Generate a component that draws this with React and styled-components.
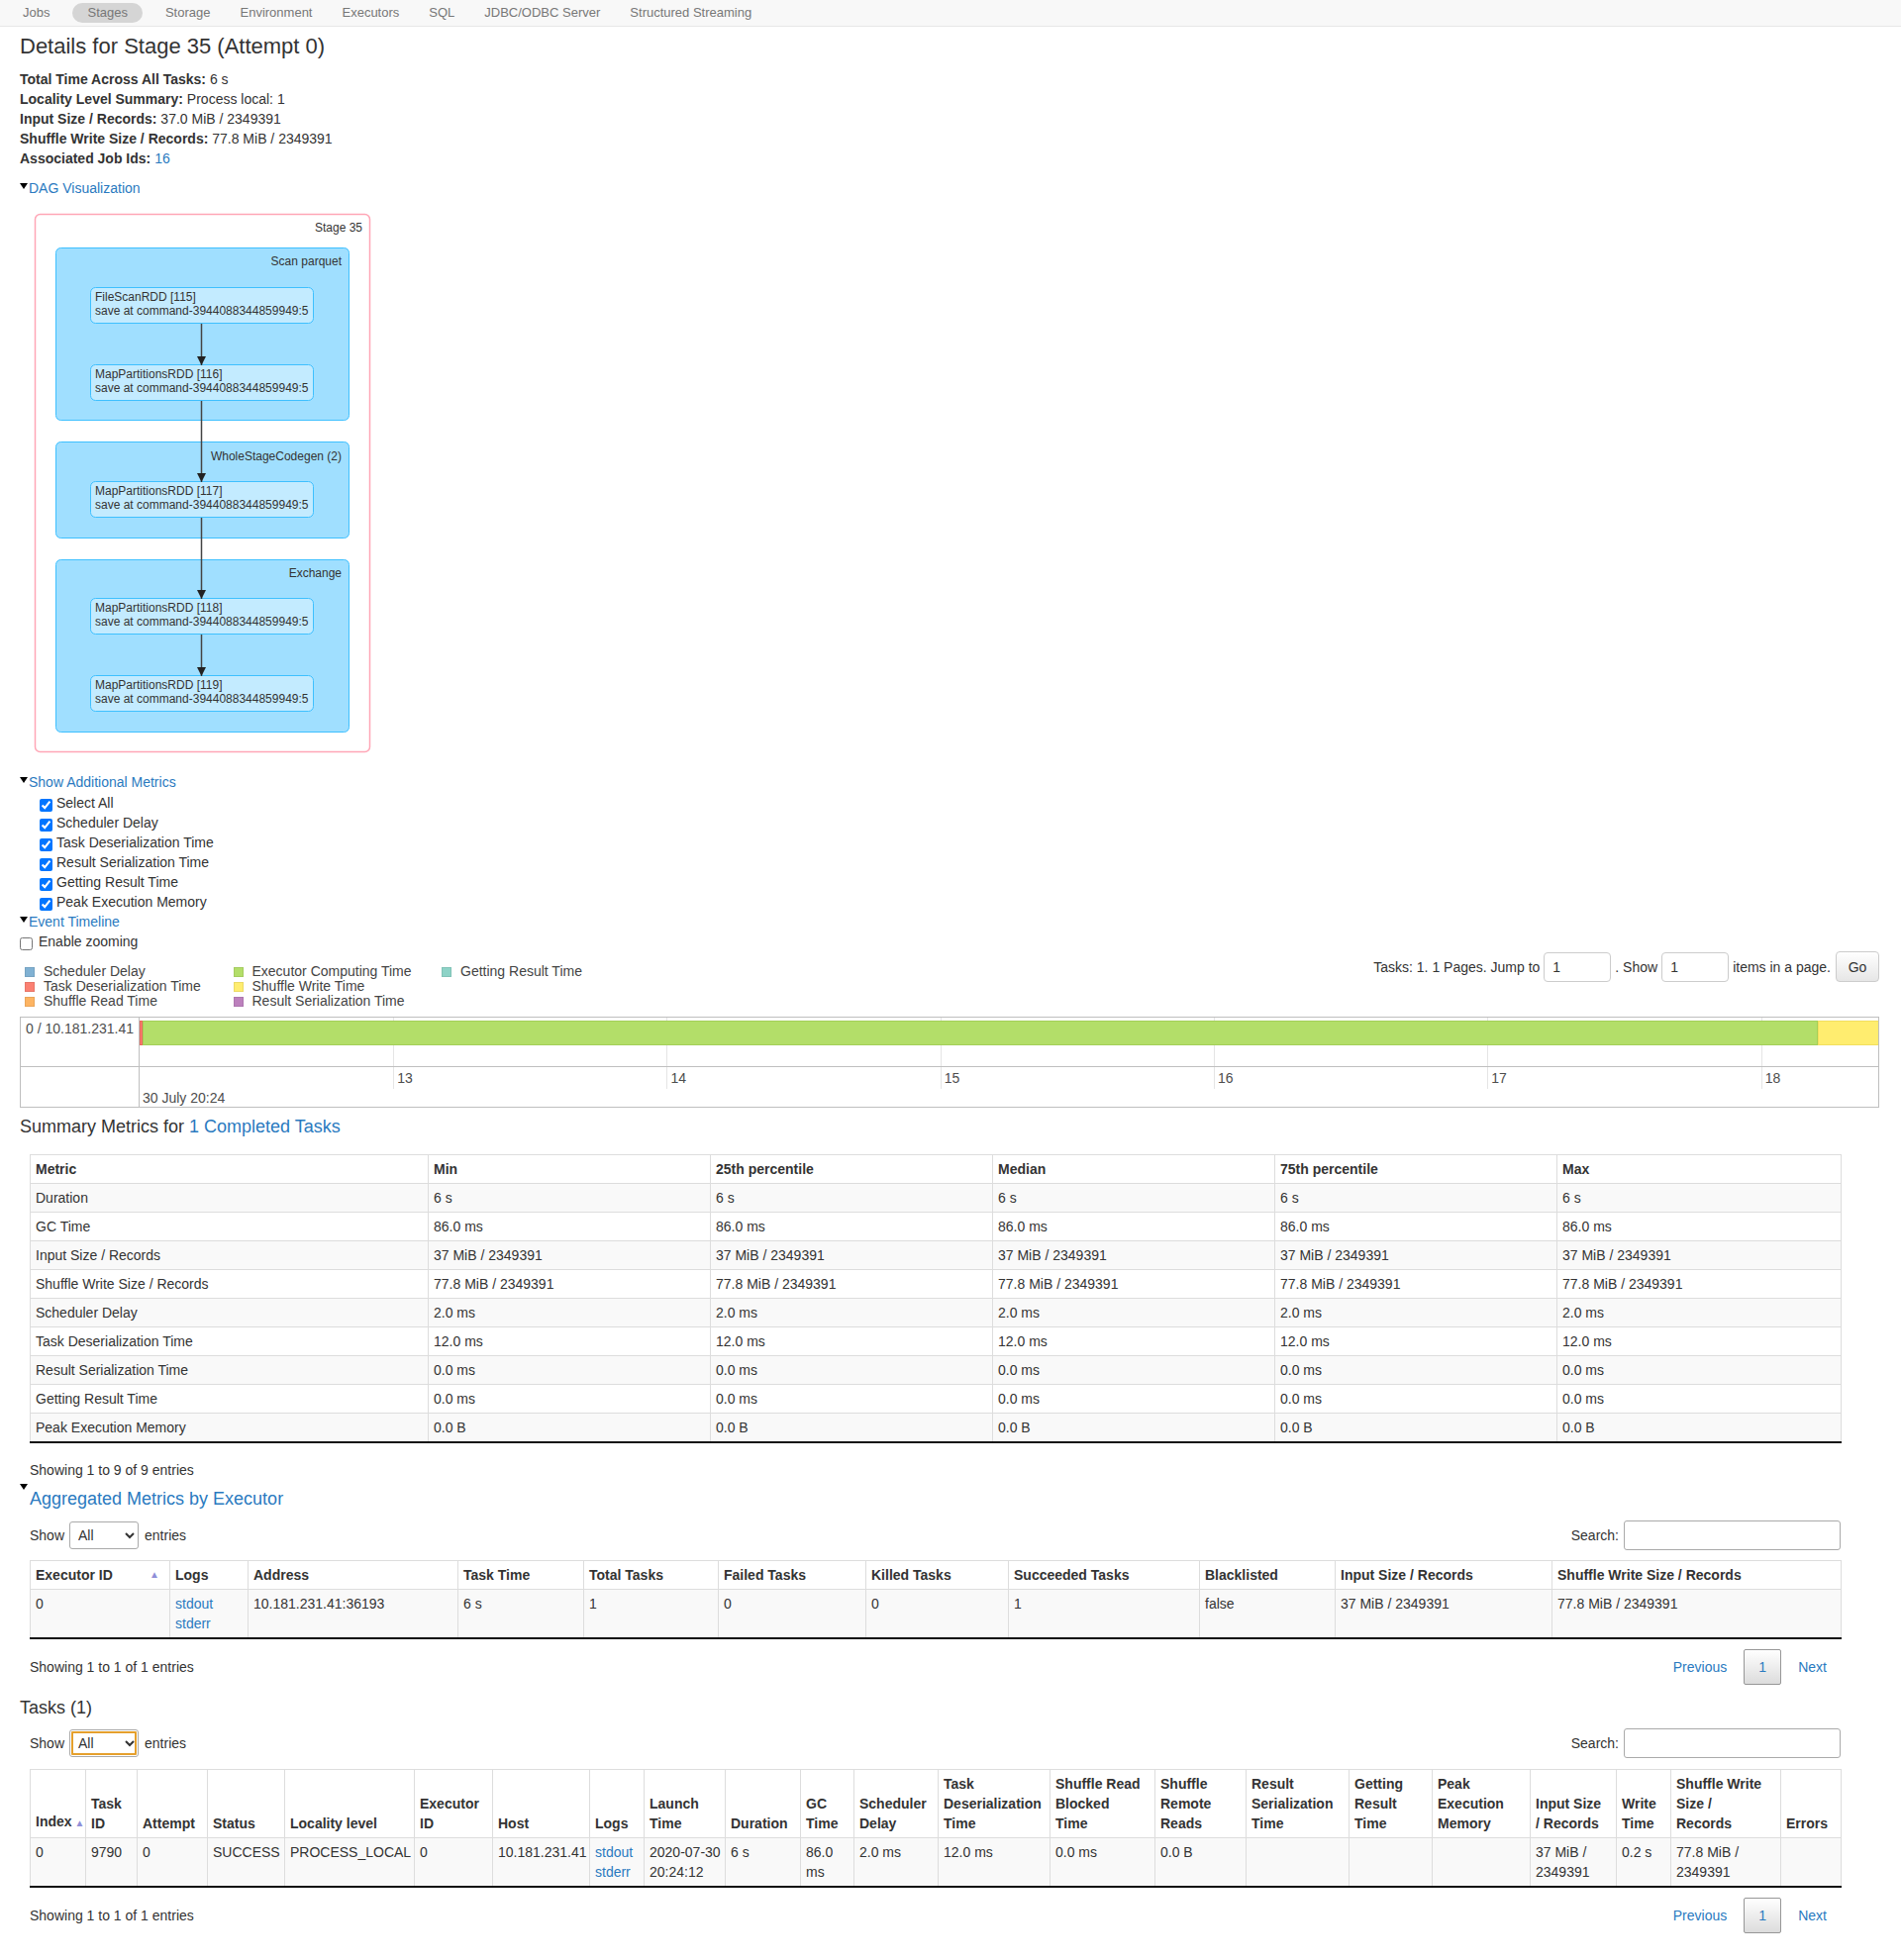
import React from 'react';
import styled, { createGlobalStyle, css } from 'styled-components';

const LINK = '#2a7ac0';

const GlobalStyle = createGlobalStyle`
  html, body {
    margin: 0;
    padding: 0;
    background: #fff;
  }
  body {
    font-family: "Liberation Sans", Arial, Helvetica, sans-serif;
    font-size: 14px;
    line-height: 20px;
    color: #333;
  }
  a {
    color: ${LINK};
    text-decoration: none;
  }
`;

const Navbar = styled.nav`
  display: flex;
  align-items: center;
  height: 27px;
  box-sizing: border-box;
  padding-left: 8px;
  background: #f8f8f8;
  border-bottom: 1px solid #e7e7e7;
  font-size: 13px;
`;

const NavItem = styled.a`
  padding: 0 15px;
  line-height: 20px;
  color: #777 !important;
  ${(p) =>
    p.$active &&
    css`
      margin: 0 8px;
      background: #d5d5d5;
      border-radius: 10px;
    `}
`;

const Page = styled.div`
  padding: 0 22px 20px 20px;
`;

const Title = styled.h3`
  margin: 6px 0 9px;
  font-size: 22px;
  line-height: 28px;
  font-weight: 400;
`;

const InfoList = styled.ul`
  list-style: none;
  margin: 0;
  padding: 0;
`;

const InfoItem = styled.li`
  line-height: 20px;
`;

const Toggle = styled.div`
  display: flex;
  align-items: center;
  margin-top: ${(p) => p.$mt || 0}px;
  line-height: 20px;
`;

const Arrow = styled.span`
  display: inline-block;
  width: 0;
  height: 0;
  border-left: 4px solid transparent;
  border-right: 4px solid transparent;
  border-top: 6px solid #000;
  margin: -4px 1px 0 0;
`;

const DagSvg = styled.svg`
  display: block;
  font-family: "Liberation Sans", Arial, sans-serif;
  font-size: 12px;
  fill: #333;
`;

const CheckList = styled.div`
  padding-left: 20px;
  margin-top: 1px;
`;

const CheckRow = styled.label`
  display: flex;
  align-items: center;
  height: 20px;
`;

const Check = styled.input`
  width: 13px;
  height: 13px;
  margin: 5px ${(p) => p.$gap || 4}px 0 0;
`;

const TimelineHead = styled.div`
  display: flex;
  justify-content: space-between;
  align-items: flex-start;
`;

const Legend = styled.div`
  display: grid;
  grid-template-columns: repeat(3, 210.5px);
  grid-template-rows: repeat(3, 15px);
  grid-auto-flow: column;
  padding: 13px 0 0 5px;
`;

const LegendItem = styled.div`
  display: flex;
  align-items: center;
  gap: 9px;
  line-height: 15px;
  color: #444;
`;

const Swatch = styled.span`
  width: 10px;
  height: 10px;
  background: ${(p) => p.$color};
  border: 1px solid rgba(0, 0, 0, 0.08);
  box-sizing: border-box;
`;

const PageForm = styled.form`
  display: flex;
  align-items: center;
  gap: 4px;
  height: 31px;
`;

const SmallInput = styled.input`
  width: 68px;
  height: 30px;
  box-sizing: border-box;
  padding: 0 8px;
  border: 1px solid #ccc;
  border-radius: 4px;
  font: inherit;
  color: #333;
`;

const GoButton = styled.button`
  width: 44px;
  height: 31px;
  margin-left: 1px;
  border: 1px solid #ccc;
  border-radius: 4px;
  background: linear-gradient(#fff, #e6e6e6);
  font: inherit;
  color: #333;
`;

const Timeline = styled.div`
  display: grid;
  grid-template-columns: 120px 1fr;
  grid-template-rows: 50px 40px;
  margin-top: 8px;
  border: 1px solid #bfbfbf;
  color: #4d4d4d;
`;

const GroupLabel = styled.div`
  padding: 1px 5px;
  border-right: 1px solid #bfbfbf;
  border-bottom: ${(p) => (p.$axis ? 'none' : '1px solid #bfbfbf')};
  color: #4d4d4d;
`;

const Canvas = styled.div`
  position: relative;
  overflow: hidden;
  border-bottom: ${(p) => (p.$axis ? 'none' : '1px solid #bfbfbf')};
`;

const GridLine = styled.div`
  position: absolute;
  top: 0;
  width: 1px;
  height: ${(p) => (p.$axis ? '22px' : '100%')};
  background: #e5e5e5;
`;

const MinorLabel = styled.div`
  position: absolute;
  top: 1px;
`;

const MajorLabel = styled.div`
  position: absolute;
  left: 3px;
  top: 21px;
`;

const Bar = styled.div`
  position: absolute;
  top: 3px;
  left: 0;
  height: 25px;
  display: flex;
`;

const Segment = styled.div`
  flex: none;
  height: 100%;
  box-sizing: border-box;
  background: ${(p) => p.$color};
  border: 1px solid ${(p) => p.$edge};
`;

const SectionTitle = styled.h4`
  margin: ${(p) => p.$mt || 0}px 0 0;
  font-size: 18px;
  line-height: 22px;
  font-weight: 400;
`;

const DataWrap = styled.div`
  margin: ${(p) => p.$mt || 0}px 39px 0 10px;
`;

const CollapseHead = styled.div`
  display: flex;
  align-items: flex-start;
  margin-top: 4px;
`;

const CollapseArrow = styled(Arrow)`
  margin: 0 2px 0 0;
`;

const ControlRow = styled.div`
  display: flex;
  justify-content: space-between;
  align-items: center;
  height: 30px;
  margin: ${(p) => p.$mt || 0}px 39px 0 10px;
`;

const ShowEntries = styled.label`
  display: flex;
  align-items: center;
`;

const EntrySelect = styled.select`
  width: 70px;
  height: 28px;
  margin: 0 6px 0 5px;
  padding: 0 4px;
  border: 1px solid #aaa;
  border-radius: 3px;
  background: #fff;
  font: inherit;
  color: #333;
  ${(p) =>
    p.$focused &&
    css`
      outline: 2px solid #e5a02d;
      outline-offset: -4px;
    `}
`;

const SearchLabel = styled.label`
  display: flex;
  align-items: center;
`;

const SearchInput = styled.input`
  width: 219px;
  height: 30px;
  box-sizing: border-box;
  margin-left: 5px;
  border: 1px solid #aaa;
  border-radius: 3px;
  font: inherit;
`;

const Table = styled.table`
  width: 100%;
  table-layout: fixed;
  border-collapse: collapse;
`;

const HeadCell = styled.th`
  padding: 4px 5px;
  border: 1px solid #ddd;
  text-align: left;
  vertical-align: bottom;
  font-weight: 700;
  line-height: 20px;
  background: #fff;
`;

const BodyRow = styled.tr`
  background: ${(p) => (p.$odd ? '#f9f9f9' : '#fff')};
`;

const Cell = styled.td`
  padding: 4px 5px;
  border: 1px solid #ddd;
  border-bottom: ${(p) => (p.$last ? '2px solid #111' : '1px solid #ddd')};
  vertical-align: top;
  line-height: 20px;
  white-space: ${(p) => (p.$nowrap ? 'nowrap' : 'normal')};
`;

const SortIcon = styled.span`
  float: ${(p) => (p.$inline ? 'none' : 'right')};
  margin: ${(p) => (p.$inline ? '0 0 0 3px' : '0 5px 0 0')};
  font-size: 10px;
  color: #8f8fd8;
`;

const LogLink = styled.a`
  display: block;
`;

const FooterRow = styled.div`
  display: flex;
  justify-content: space-between;
  align-items: center;
  height: 36px;
  margin-top: ${(p) => p.$mt || 0}px;
`;

const InfoText = styled.div`
  padding-top: ${(p) => p.$pt || 0}px;
`;

const Pager = styled.div`
  display: flex;
  align-items: center;
`;

const PageLink = styled.a`
  padding: 0 14px;
`;

const PageCurrent = styled.span`
  display: inline-flex;
  align-items: center;
  justify-content: center;
  width: 38px;
  height: 36px;
  margin: 0 3px;
  box-sizing: border-box;
  border: 1px solid #979797;
  border-radius: 2px;
  background: linear-gradient(#fff, #dcdcdc);
  color: ${LINK};
`;

const navItems = ['Jobs', 'Stages', 'Storage', 'Environment', 'Executors', 'SQL', 'JDBC/ODBC Server', 'Structured Streaming'];

const metricChecks = [
  'Select All',
  'Scheduler Delay',
  'Task Deserialization Time',
  'Result Serialization Time',
  'Getting Result Time',
  'Peak Execution Memory',
];

const legend = [
  ['Scheduler Delay', '#80B1D3'],
  ['Task Deserialization Time', '#FB8072'],
  ['Shuffle Read Time', '#FDB462'],
  ['Executor Computing Time', '#B3DE69'],
  ['Shuffle Write Time', '#FFED6F'],
  ['Result Serialization Time', '#BC80BD'],
  ['Getting Result Time', '#8DD3C7'],
];

// timeline scale: seconds past 20:24:00
const PX_PER_SEC = 276.3;
const WINDOW_START = 12.073;
const ticks = [13, 14, 15, 16, 17, 18];
const segments = [
  { ms: 12, color: '#FB8072', edge: '#e8695b' },
  { ms: 6123, color: '#B3DE69', edge: '#a3cf58' },
  { ms: 300, color: '#FFED6F', edge: '#f2df5e' },
];

const summaryHead = ['Metric', 'Min', '25th percentile', 'Median', '75th percentile', 'Max'];
const summaryCols = [402, 285, 285, 285, 285, 287];
const summaryRows = [
  ['Duration', '6 s'],
  ['GC Time', '86.0 ms'],
  ['Input Size / Records', '37 MiB / 2349391'],
  ['Shuffle Write Size / Records', '77.8 MiB / 2349391'],
  ['Scheduler Delay', '2.0 ms'],
  ['Task Deserialization Time', '12.0 ms'],
  ['Result Serialization Time', '0.0 ms'],
  ['Getting Result Time', '0.0 ms'],
  ['Peak Execution Memory', '0.0 B'],
];

const execHead = [
  'Executor ID',
  'Logs',
  'Address',
  'Task Time',
  'Total Tasks',
  'Failed Tasks',
  'Killed Tasks',
  'Succeeded Tasks',
  'Blacklisted',
  'Input Size / Records',
  'Shuffle Write Size / Records',
];
const execCols = [141, 79, 212, 127, 136, 149, 144, 193, 137, 219, 292];
const execRow = ['0', 'LOGS', '10.181.231.41:36193', '6 s', '1', '0', '0', '1', 'false', '37 MiB / 2349391', '77.8 MiB / 2349391'];

const taskHead = [
  ['Index'],
  ['Task', 'ID'],
  ['Attempt'],
  ['Status'],
  ['Locality level'],
  ['Executor', 'ID'],
  ['Host'],
  ['Logs'],
  ['Launch', 'Time'],
  ['Duration'],
  ['GC', 'Time'],
  ['Scheduler', 'Delay'],
  ['Task', 'Deserialization', 'Time'],
  ['Shuffle Read', 'Blocked', 'Time'],
  ['Shuffle', 'Remote', 'Reads'],
  ['Result', 'Serialization', 'Time'],
  ['Getting', 'Result', 'Time'],
  ['Peak', 'Execution', 'Memory'],
  ['Input Size', '/ Records'],
  ['Write', 'Time'],
  ['Shuffle Write', 'Size /', 'Records'],
  ['Errors'],
];
const taskCols = [56, 52, 71, 78, 131, 79, 98, 55, 82, 76, 54, 85, 113, 106, 92, 104, 84, 99, 87, 55, 111, 61];
const taskRow = [
  ['0'],
  ['9790'],
  ['0'],
  ['SUCCESS'],
  ['PROCESS_LOCAL'],
  ['0'],
  ['10.181.231.41'],
  'LOGS',
  ['2020-07-30', '20:24:12'],
  ['6 s'],
  ['86.0', 'ms'],
  ['2.0 ms'],
  ['12.0 ms'],
  ['0.0 ms'],
  ['0.0 B'],
  [],
  [],
  [],
  ['37 MiB /', '2349391'],
  ['0.2 s'],
  ['77.8 MiB /', '2349391'],
  [],
];

const dagClusters = [
  { label: 'Scan parquet', y: 50, h: 174, ly: 68 },
  { label: 'WholeStageCodegen (2)', y: 246, h: 97, ly: 265 },
  { label: 'Exchange', y: 365, h: 174, ly: 383 },
];
const dagNodes = [
  { name: 'FileScanRDD [115]', y: 90 },
  { name: 'MapPartitionsRDD [116]', y: 168 },
  { name: 'MapPartitionsRDD [117]', y: 286 },
  { name: 'MapPartitionsRDD [118]', y: 404 },
  { name: 'MapPartitionsRDD [119]', y: 482 },
];
const NODE_H = 36;
const EDGE_X = 183.5;

const Lines = ({ lines }) =>
  lines.map((l, j) => (
    <React.Fragment key={j}>
      {j > 0 && <br />}
      {l}
    </React.Fragment>
  ));

const DagGraph = () => (
  <DagSvg width="380" height="565" viewBox="0 0 380 565">
    <defs>
      <marker id="dag-arrow" viewBox="0 0 10 10" refX="10" refY="5" markerUnits="userSpaceOnUse" markerWidth="9" markerHeight="9" orient="auto">
        <path d="M0,0 L10,5 L0,10 z" fill="#222" />
      </marker>
    </defs>
    <rect x="15.5" y="16.5" width="338" height="543" rx="5" fill="#fff" stroke="#FFA6B6" strokeWidth="1.5" />
    <text x="346" y="34" textAnchor="end">Stage 35</text>
    {dagClusters.map((c) => (
      <g key={c.label}>
        <rect x="36.5" y={c.y + 0.5} width="296" height={c.h} rx="5" fill="#A0DFFF" stroke="#3EC0FF" />
        <text x="325" y={c.ly} textAnchor="end">
          {c.label}
        </text>
      </g>
    ))}
    {dagNodes.map((n) => (
      <g key={n.name}>
        <rect x="71.5" y={n.y + 0.5} width="225" height={NODE_H} rx="5" fill="#C3EBFF" stroke="#3EC0FF" />
        <text x="76" y={n.y + 14}>
          {n.name}
        </text>
        <text x="76" y={n.y + 28}>
          save at command-3944088344859949:5
        </text>
      </g>
    ))}
    {dagNodes.slice(1).map((n, i) => (
      <line
        key={n.name}
        x1={EDGE_X}
        y1={dagNodes[i].y + NODE_H + 1}
        x2={EDGE_X}
        y2={n.y + 1}
        stroke="#444"
        strokeWidth="1.5"
        markerEnd="url(#dag-arrow)"
      />
    ))}
  </DagSvg>
);

const EventTimeline = () => (
  <Timeline>
    <GroupLabel>0 / 10.181.231.41</GroupLabel>
    <Canvas>
      {ticks.map((t) => (
        <GridLine key={t} style={{ left: (t - WINDOW_START) * PX_PER_SEC }} />
      ))}
      <Bar>
        {segments.map((s) => (
          <Segment key={s.color} $color={s.color} $edge={s.edge} style={{ width: (s.ms / 1000) * PX_PER_SEC }} />
        ))}
      </Bar>
    </Canvas>
    <GroupLabel $axis />
    <Canvas $axis>
      {ticks.map((t) => (
        <React.Fragment key={t}>
          <GridLine $axis style={{ left: (t - WINDOW_START) * PX_PER_SEC }} />
          <MinorLabel style={{ left: (t - WINDOW_START) * PX_PER_SEC + 4 }}>{t}</MinorLabel>
        </React.Fragment>
      ))}
      <MajorLabel>30 July 20:24</MajorLabel>
    </Canvas>
  </Timeline>
);

const Logs = () => (
  <>
    <LogLink href="#">stdout</LogLink>
    <LogLink href="#">stderr</LogLink>
  </>
);

const Pagination = () => (
  <Pager>
    <PageLink href="#">Previous</PageLink>
    <PageCurrent>1</PageCurrent>
    <PageLink href="#">Next</PageLink>
  </Pager>
);

const Controls = ({ mt, focused }) => (
  <ControlRow $mt={mt}>
    <ShowEntries>
      Show
      <EntrySelect defaultValue="all" $focused={focused}>
        <option value="all">All</option>
        <option value="20">20</option>
        <option value="40">40</option>
      </EntrySelect>
      entries
    </ShowEntries>
    <SearchLabel>
      Search:
      <SearchInput type="search" />
    </SearchLabel>
  </ControlRow>
);

const ColGroup = ({ widths }) => (
  <colgroup>
    {widths.map((w, i) => (
      <col key={i} style={{ width: w }} />
    ))}
  </colgroup>
);

export default function App() {
  return (
    <>
      <GlobalStyle />
      <Navbar>
        {navItems.map((item) => (
          <NavItem key={item} href="#" $active={item === 'Stages'}>
            {item}
          </NavItem>
        ))}
      </Navbar>
      <Page>
        <Title>Details for Stage 35 (Attempt 0)</Title>
        <InfoList>
          <InfoItem>
            <strong>Total Time Across All Tasks:</strong> 6 s
          </InfoItem>
          <InfoItem>
            <strong>Locality Level Summary:</strong> Process local: 1
          </InfoItem>
          <InfoItem>
            <strong>Input Size / Records:</strong> 37.0 MiB / 2349391
          </InfoItem>
          <InfoItem>
            <strong>Shuffle Write Size / Records:</strong> 77.8 MiB / 2349391
          </InfoItem>
          <InfoItem>
            <strong>Associated Job Ids:</strong> <a href="#">16</a>
          </InfoItem>
        </InfoList>

        <Toggle $mt={10}>
          <Arrow />
          <a href="#">DAG Visualization</a>
        </Toggle>
        <DagGraph />

        <Toggle $mt={15}>
          <Arrow />
          <a href="#">Show Additional Metrics</a>
        </Toggle>
        <CheckList>
          {metricChecks.map((m) => (
            <CheckRow key={m}>
              <Check type="checkbox" defaultChecked />
              {m}
            </CheckRow>
          ))}
        </CheckList>
        <Toggle>
          <Arrow />
          <a href="#">Event Timeline</a>
        </Toggle>
        <CheckRow>
          <Check type="checkbox" $gap={6} />
          Enable zooming
        </CheckRow>

        <TimelineHead>
          <Legend>
            {legend.map(([name, color]) => (
              <LegendItem key={name}>
                <Swatch $color={color} />
                {name}
              </LegendItem>
            ))}
          </Legend>
          <PageForm onSubmit={(e) => e.preventDefault()}>
            <span>Tasks: 1. 1 Pages. Jump to</span>
            <SmallInput defaultValue="1" />
            <span>. Show</span>
            <SmallInput defaultValue="1" />
            <span>items in a page.</span>
            <GoButton type="submit">Go</GoButton>
          </PageForm>
        </TimelineHead>

        <EventTimeline />

        <SectionTitle $mt={8}>
          Summary Metrics for <a href="#">1 Completed Tasks</a>
        </SectionTitle>
        <DataWrap $mt={17}>
          <Table>
            <ColGroup widths={summaryCols} />
            <thead>
              <tr>
                {summaryHead.map((h) => (
                  <HeadCell key={h}>{h}</HeadCell>
                ))}
              </tr>
            </thead>
            <tbody>
              {summaryRows.map(([name, value], r) => (
                <BodyRow key={name} $odd={r % 2 === 0}>
                  <Cell $last={r === summaryRows.length - 1}>{name}</Cell>
                  {[0, 1, 2, 3, 4].map((c) => (
                    <Cell key={c} $last={r === summaryRows.length - 1}>
                      {value}
                    </Cell>
                  ))}
                </BodyRow>
              ))}
            </tbody>
          </Table>
          <InfoText $pt={17}>Showing 1 to 9 of 9 entries</InfoText>
        </DataWrap>

        <CollapseHead>
          <CollapseArrow />
          <SectionTitle $mt={4}>
            <a href="#">Aggregated Metrics by Executor</a>
          </SectionTitle>
        </CollapseHead>
        <Controls mt={11} />
        <DataWrap $mt={10}>
          <Table>
            <ColGroup widths={execCols} />
            <thead>
              <tr>
                {execHead.map((h, i) => (
                  <HeadCell key={h}>
                    {i === 0 && <SortIcon>▲</SortIcon>}
                    {h}
                  </HeadCell>
                ))}
              </tr>
            </thead>
            <tbody>
              <BodyRow $odd>
                {execRow.map((v, i) => (
                  <Cell key={i} $last>
                    {v === 'LOGS' ? <Logs /> : v}
                  </Cell>
                ))}
              </BodyRow>
            </tbody>
          </Table>
          <FooterRow $mt={10}>
            <InfoText>Showing 1 to 1 of 1 entries</InfoText>
            <Pagination />
          </FooterRow>
        </DataWrap>

        <SectionTitle $mt={12}>Tasks (1)</SectionTitle>
        <Controls mt={10} focused />
        <DataWrap $mt={11}>
          <Table>
            <ColGroup widths={taskCols} />
            <thead>
              <tr>
                {taskHead.map((lines, i) => (
                  <HeadCell key={i}>
                    <Lines lines={lines} />
                    {i === 0 && <SortIcon $inline>▲</SortIcon>}
                  </HeadCell>
                ))}
              </tr>
            </thead>
            <tbody>
              <BodyRow $odd>
                {taskRow.map((v, i) => (
                  <Cell key={i} $last $nowrap>
                    {v === 'LOGS' ? <Logs /> : <Lines lines={v} />}
                  </Cell>
                ))}
              </BodyRow>
            </tbody>
          </Table>
          <FooterRow $mt={10}>
            <InfoText>Showing 1 to 1 of 1 entries</InfoText>
            <Pagination />
          </FooterRow>
        </DataWrap>
      </Page>
    </>
  );
}
